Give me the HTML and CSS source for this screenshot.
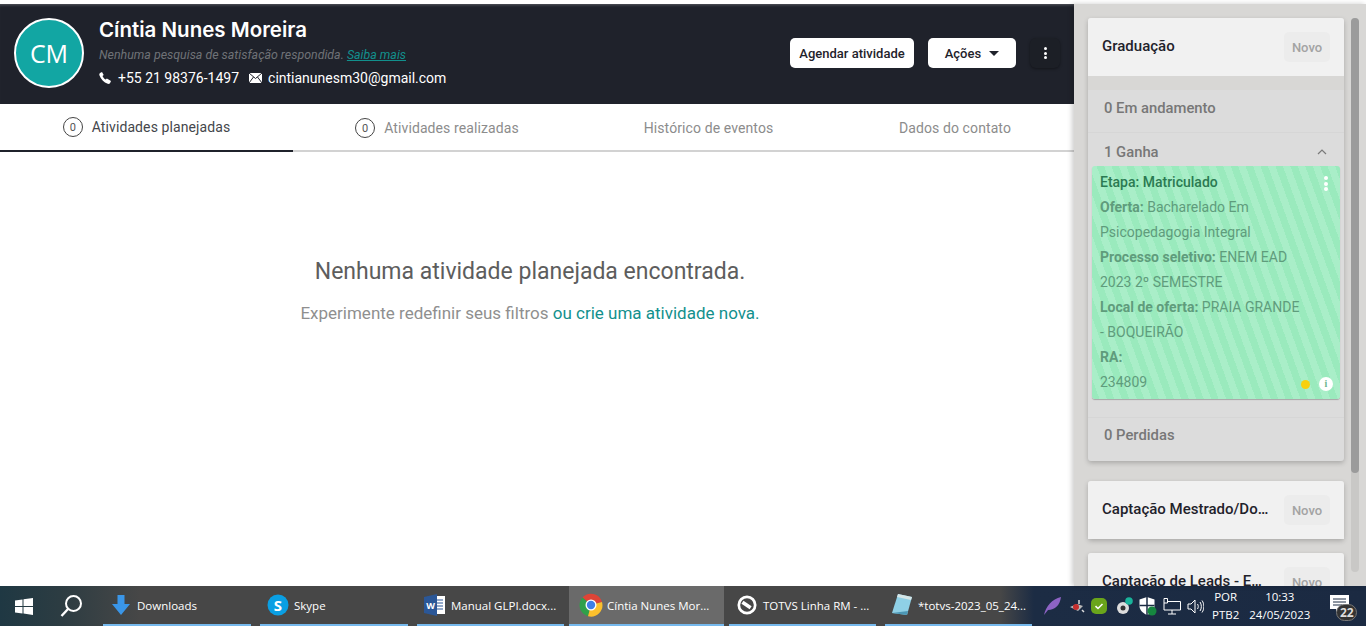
FILE: index.html
```html
<!DOCTYPE html>
<html lang="pt-BR">
<head>
  <meta charset="UTF-8">
  <title>Cíntia Nunes Moreira</title>
  <link rel="stylesheet" href="styles.css">
</head>
<body>
  <div class="top-strip"></div>
  <div class="app">
    <main class="main">
      <header class="contact-header">
        <div class="avatar">CM</div>
        <div class="contact-info">
          <h1>Cíntia Nunes Moreira</h1>
          <p class="survey">Nenhuma pesquisa de satisfação respondida. <a href="#">Saiba mais</a></p>
          <div class="contact-line">
            <svg class="ico-phone" width="12" height="12" viewBox="0 0 12 12"><path d="M1 .9 3 0l1.700 3-1.200 1.100c.6 1.600 1.700 2.800 3.200 3.500L7.900 6.500 12 9l-1 2.200c-.6.700-1.500.9-2.300.6C4.900 10.400 1.800 7.200.4 3.200.1 2.300.4 1.400 1 .9z" fill="#fff"/></svg>
            <span class="phone">+55 21 98376-1497</span>
            <svg class="ico-mail" width="13" height="10" viewBox="0 0 13 10"><rect width="13" height="10" fill="#fff"/><path d="M0 0l6.500 5.500L13 0M0 10l4.500-6M13 10L8.500 4" fill="none" stroke="#1f222b" stroke-width="1"/></svg>
            <span>cintianunesm30@gmail.com</span>
          </div>
        </div>
        <div class="header-actions">
          <button class="btn-white btn-schedule">Agendar atividade</button>
          <button class="btn-white btn-actions">Ações <span class="caret"></span></button>
          <button class="btn-more"><i></i><i></i><i></i></button>
        </div>
      </header>

      <nav class="tabs">
        <div class="tab active"><span class="count">0</span>Atividades planejadas</div>
        <div class="tab"><span class="count">0</span>Atividades realizadas</div>
        <div class="tab">Histórico de eventos</div>
        <div class="tab">Dados do contato</div>
      </nav>

      <section class="empty">
        <h2>Nenhuma atividade planejada encontrada.</h2>
        <p>Experimente redefinir seus filtros <a href="#">ou crie uma atividade nova.</a></p>
      </section>
    </main>

    <aside class="side">
      <div class="funnel">
        <div class="funnel-head">
          <span class="funnel-title">Graduação</span>
          <span class="btn-new">Novo</span>
        </div>
        <div class="funnel-body">
          <div class="status-row">0 Em andamento</div>
          <div class="status-row status-open">
            <span>1 Ganha</span>
            <svg width="10" height="6" viewBox="0 0 10 6"><path d="M1 5l4-4 4 4" fill="none" stroke="#7a7a7a" stroke-width="1.200"/></svg>
          </div>
          <div class="deal">
            <div class="deal-more"><i></i><i></i><i></i></div>
            <p class="deal-stage">Etapa: Matriculado</p>
            <p><b>Oferta:</b> Bacharelado Em Psicopedagogia Integral</p>
            <p><b>Processo seletivo:</b> ENEM EAD 2023 2º SEMESTRE</p>
            <p><b>Local de oferta:</b> PRAIA GRANDE - BOQUEIRÃO</p>
            <p><b>RA:</b></p>
            <p>234809</p>
            <div class="deal-icons">
              <span class="dot"></span>
              <span class="info">i</span>
            </div>
          </div>
          <div class="status-row status-lost">0 Perdidas</div>
        </div>
      </div>

      <div class="funnel funnel-closed">
        <div class="funnel-head">
          <span class="funnel-title">Captação Mestrado/Doutorado</span>
          <span class="btn-new">Novo</span>
        </div>
      </div>

      <div class="funnel funnel-closed funnel-last">
        <div class="funnel-head">
          <span class="funnel-title">Captação de Leads - Especialização</span>
          <span class="btn-new">Novo</span>
        </div>
      </div>
      <div class="scrollbar"><div class="scroll-thumb"></div></div>
    </aside>
  </div>

  <footer class="taskbar">
    <div class="start">
      <svg width="18" height="17" viewBox="0 0 18 17"><path d="M0 2.500 7.500 1.400v6.500H0zM8.500 1.300 18 0v7.900H8.500zM0 8.900h7.500v6.600L0 14.500zM8.500 8.900H18V17l-9.500-1.400z" fill="#fff"/></svg>
    </div>
    <div class="search">
      <svg width="24" height="24" viewBox="0 0 24 24"><circle cx="13.500" cy="9.500" r="7.500" fill="none" stroke="#fff" stroke-width="2"/><path d="M8 15l-6.500 7" stroke="#fff" stroke-width="2.400" fill="none"/></svg>
    </div>
    <div class="tasks">
      <div class="task t-downloads">
        <svg width="18" height="20" viewBox="0 0 18 20"><path d="M5.500 0h7v9H18l-9 11L0 9h5.500z" fill="#3a96e8"/></svg>
        <span>Downloads</span>
      </div>
      <div class="task t-skype">
        <svg width="22" height="22" viewBox="0 0 22 22"><circle cx="11" cy="11" r="10.500" fill="#0a9fe3"/><text x="11" y="16.500" text-anchor="middle" class="skype-s">S</text></svg>
        <span>Skype</span>
      </div>
      <div class="task t-word">
        <svg width="22" height="22" viewBox="0 0 22 22"><rect x="9" y="2" width="12" height="18" fill="#fff"/><path d="M12 6h7M12 9h7M12 12h7M12 15h7" stroke="#2b5797" stroke-width="1.200"/><path d="M0 3l13-3v22L0 19z" fill="#2b5797"/><text x="6.500" y="14.500" text-anchor="middle" class="word-w">W</text></svg>
        <span>Manual GLPI.docx...</span>
      </div>
      <div class="task t-chrome">
        <svg width="24" height="24" viewBox="0 0 24 24"><path d="M12 12 3.400 4.500A11.500 11.500 0 0 1 23 9z" fill="#de4437"/><path d="M12 12 3.400 4.500A11.500 11.500 0 0 0 9 23.200z" fill="#2fa04a"/><path d="M12 12 23 9A11.500 11.500 0 0 1 9 23.200z" fill="#fbc02d"/><circle cx="12" cy="12" r="5.500" fill="#fff"/><circle cx="12" cy="12" r="4.200" fill="#3f7fe6"/></svg>
        <span>Cíntia Nunes Mor...</span>
      </div>
      <div class="task t-totvs">
        <svg width="20" height="20" viewBox="0 0 22 22"><circle cx="11" cy="11" r="9" fill="none" stroke="#fff" stroke-width="3"/><path d="M6 8l9 6" stroke="#fff" stroke-width="4"/></svg>
        <span>TOTVS Linha RM - ...</span>
      </div>
      <div class="task t-notes">
        <svg width="22" height="24" viewBox="0 0 22 24"><path d="M7 1l14 3-5 18L1 20z" fill="#8fd0e6"/><path d="M7 1l14 3-1 3L6 4z" fill="#d5e6e8"/><path d="M1 20l15 2 1-4z" fill="#4c97b5"/></svg>
        <span>*totvs-2023_05_24...</span>
      </div>
    </div>
    <div class="tray">
      <svg class="tray-ico ico-feather" width="20" height="20" viewBox="0 0 20 20"><path d="M2 19C4 10 10 3 19 1c-1 8-6 13-13 13z" fill="#8d63c4"/></svg>
      <svg class="tray-ico ico-bird" width="18" height="16" viewBox="0 0 18 16"><path d="M2 9l7-3 6 2-5 5z" fill="#b9b9b9"/><circle cx="8" cy="9" r="3" fill="#c62f2f"/><path d="M11 2v4M14 12l2 2" stroke="#ddd" stroke-width="1.500"/></svg>
      <svg class="tray-ico ico-check" width="16" height="16" viewBox="0 0 16 16"><rect width="16" height="16" rx="5" fill="#6aa51b"/><path d="M4.500 8.200l2.500 2.300 4.500-4.500" fill="none" stroke="#fff" stroke-width="1.600"/></svg>
      <svg class="tray-ico ico-sync" width="18" height="18" viewBox="0 0 18 18"><circle cx="7" cy="11" r="6" fill="#ddd"/><circle cx="7" cy="11" r="2.500" fill="#333"/><circle cx="13" cy="4" r="3.800" fill="#19b39a"/></svg>
      <svg class="tray-ico" width="18" height="19" viewBox="0 0 18 19"><path d="M8 0l7.500 2.500V9c0 4-3 7-7.500 9C3.500 16 .5 13 .5 9V2.500z" fill="#fff"/><path d="M8 0v18M.5 8.500h15" stroke="#1c2c44" stroke-width="1.500"/><circle cx="13" cy="14" r="4.500" fill="#16873f"/></svg>
      <svg class="tray-ico" width="18" height="17" viewBox="0 0 18 17"><path d="M4.500 3.500H17.500V12H1V.5H4.500V5H1M9 12v4M5 16h8" fill="none" stroke="#fff" stroke-width="1"/></svg>
      <svg class="tray-ico" width="17" height="15" viewBox="0 0 17 15"><path d="M1 5h3l4-4v13l-4-4H1zM10.500 5c1 1.500 1 3.500 0 5M13 3c1.800 2.500 1.800 6.500 0 9M15 1.500c2.500 3.500 2.500 8.500 0 12" fill="none" stroke="#fff" stroke-width="1"/></svg>
      <div class="lang"><span>POR</span><span>PTB2</span></div>
      <div class="clock"><span>10:33</span><span>24/05/2023</span></div>
      <div class="notify">
        <svg width="19" height="17" viewBox="0 0 19 17"><path d="M0 0h19v14H9l-3 3v-3H0z" fill="#fff"/><path d="M3 4h13M3 7h13M3 10h9" stroke="#1c2c44" stroke-width="1"/></svg>
        <span class="notify-count">22</span>
      </div>
    </div>
  </footer>
</body>
</html>
```

FILE: styles.css
```css
* {
  box-sizing: border-box;
}

html, body {
  margin: 0;
  height: 626px;
  overflow: hidden;
}

body {
  display: flex;
  flex-direction: column;
  font-family: Roboto, "Liberation Sans", sans-serif;
  background: #fff;
  color: #1f222b;
}

.top-strip {
  height: 4px;
  background: #fff;
  flex: none;
}

.app {
  height: 582px;
  display: flex;
  flex: none;
}

/* main column */
.main {
  width: 1074px;
  flex: none;
  background: #fff;
}

.contact-header {
  height: 100px;
  background: #1f222b;
  box-shadow: inset 0 3px 3px -2px rgba(255, 255, 255, 0.25);
  display: flex;
  align-items: flex-start;
  padding: 14px 14px 0 14px;
  color: #fff;
}

.avatar {
  width: 70px;
  height: 70px;
  border-radius: 50%;
  border: 2px solid #fff;
  background: #12a6a3;
  display: flex;
  align-items: center;
  justify-content: center;
  font-family: "Open Sans", sans-serif;
  font-size: 25px;
  flex: none;
}

.contact-info {
  margin-left: 15px;
}

.contact-info h1 {
  font-family: Inter, sans-serif;
  font-weight: 600;
  font-size: 20.500px;
  line-height: 24px;
  margin: 0;
}

.survey {
  margin: 6px 0 0;
  font-size: 12.400px;
  line-height: 14px;
  font-style: italic;
  color: #6f7277;
}

.survey a {
  color: #12908d;
}

.contact-line {
  display: flex;
  align-items: center;
  margin-top: 7px;
  font-size: 14px;
  line-height: 18px;
}

.ico-phone {
  margin-right: 7px;
}

.phone {
  margin-right: 10px;
}

.ico-mail {
  margin-right: 6px;
}

.header-actions {
  margin-left: auto;
  display: flex;
  align-items: center;
  padding-top: 20px;
}

.btn-white {
  height: 30px;
  background: #fff;
  color: #1f222b;
  border: none;
  border-radius: 5px;
  font-family: Roboto, sans-serif;
  font-size: 13px;
  font-weight: 500;
  padding: 0;
}

.btn-schedule {
  width: 124px;
}

.btn-actions {
  width: 88px;
  margin-left: 14px;
}

.caret {
  display: inline-block;
  width: 0;
  height: 0;
  margin-left: 5px;
  vertical-align: 2px;
  border-left: 5px solid transparent;
  border-right: 5px solid transparent;
  border-top: 5px solid #1f222b;
}

.btn-more {
  width: 30px;
  height: 30px;
  margin-left: 14px;
  background: #1c1f26;
  border: none;
  border-radius: 6px;
  display: flex;
  flex-direction: column;
  align-items: center;
  justify-content: center;
  gap: 1.500px;
  padding: 0;
  box-shadow: 0 1px 3px rgba(0, 0, 0, 0.4);
}

.btn-more i {
  width: 3px;
  height: 3px;
  border-radius: 50%;
  background: #fff;
}

/* tabs */
.tabs {
  height: 48px;
  display: grid;
  grid-template-columns: 293px 288px 255px 1fr;
  border-bottom: 2px solid #d2d2d2;
}

.tab {
  display: flex;
  align-items: center;
  justify-content: center;
  height: 48px;
  font-size: 14px;
  letter-spacing: 0.1px;
  color: #8c8c8c;
}

.tab.active {
  color: #44464b;
  border-bottom: 2px solid #1f222b;
}

.count {
  width: 20px;
  height: 20px;
  border: 1px solid #444;
  border-radius: 50%;
  display: flex;
  align-items: center;
  justify-content: center;
  font-size: 11px;
  color: #555;
  margin-right: 9px;
  letter-spacing: 0;
}

/* empty state */
.empty {
  text-align: center;
  padding: 106px 14px 0 0;
}

.empty h2 {
  margin: 0;
  font-weight: 400;
  font-size: 23px;
  line-height: 28px;
  color: #5d5d5d;
}

.empty p {
  margin: 17px 0 0;
  font-size: 17px;
  line-height: 20px;
  color: #8f8f8f;
}

.empty a {
  color: #12908d;
  text-decoration: none;
}

/* funnels on the right */
.side {
  position: relative;
  flex: 1;
  background: #d8d7d5;
  box-shadow: -2px 0 5px rgba(0, 0, 0, 0.2);
  padding: 14px 22px 0 14px;
  overflow: hidden;
}

.funnel {
  width: 256px;
  border-radius: 3px;
  box-shadow: 0 2px 5px rgba(0, 0, 0, 0.22);
  background: #dcdcdc;
}

.funnel-closed {
  margin-top: 20px;
}

.funnel-last {
  margin-top: 14px;
}

.funnel-head {
  height: 58px;
  background: #f1f1f1;
  display: flex;
  align-items: center;
  justify-content: space-between;
  padding: 0 14px;
  border-radius: 3px 3px 0 0;
}

.funnel-title {
  font-size: 15px;
  font-weight: 500;
  color: #1f222b;
  white-space: nowrap;
  overflow: hidden;
  text-overflow: ellipsis;
  max-width: 167px;
  margin-top: -2px;
}

.btn-new {
  width: 46px;
  height: 30px;
  flex: none;
  border-radius: 5px;
  background: #ececec;
  color: #a3a3a3;
  font-size: 13px;
  font-weight: 500;
  display: flex;
  align-items: center;
  justify-content: center;
}

.funnel-body {
  border-top: 14px solid #d8d7d5;
}

.status-row {
  height: 43px;
  padding: 0 16px 6px;
  display: flex;
  align-items: center;
  justify-content: space-between;
  font-size: 14.800px;
  font-weight: 500;
  color: #777;
  border-bottom: 1px solid #d6d6d6;
}

.status-open {
  height: 33px;
  padding-top: 5px;
  padding-bottom: 0;
  border-bottom: none;
}

.status-open svg {
  margin-right: 1px;
}

.status-lost {
  height: 44px;
  margin-top: 18px;
  padding-bottom: 10px;
  border-top: 1px solid #d6d6d6;
  border-bottom: none;
}

.deal {
  position: relative;
  width: 248px;
  height: 233px;
  margin: 0 4px;
  padding: 4px 8px;
  border-radius: 3px;
  box-shadow: 0 1px 1px rgba(0, 0, 0, 0.25);
  background: repeating-linear-gradient(70deg, #9aeabd 0, #9aeabd 7px, #a9eec8 7px, #a9eec8 14px);
  font-size: 14px;
  color: #5f9c7c;
}

.deal p {
  margin: 0;
  line-height: 25px;
  width: 204px;
}

.deal b {
  font-weight: 700;
}

.deal .deal-stage {
  font-weight: 500;
  color: #2b7a52;
}

.deal-more {
  position: absolute;
  top: 10px;
  right: 12px;
  display: flex;
  flex-direction: column;
  gap: 1.500px;
}

.deal-more i {
  width: 4px;
  height: 4px;
  border-radius: 50%;
  background: #fff;
}

.deal-icons {
  position: absolute;
  right: 7px;
  bottom: 8px;
  display: flex;
  align-items: center;
  gap: 9px;
}

.dot {
  width: 9px;
  height: 9px;
  border-radius: 50%;
  background: #f7d00f;
}

.info {
  width: 14px;
  height: 14px;
  border-radius: 50%;
  background: #fff;
  color: #6bb58e;
  font-family: "Liberation Serif", serif;
  font-weight: 700;
  font-size: 10px;
  line-height: 14px;
  text-align: center;
}

.scrollbar {
  position: absolute;
  top: 14px;
  right: 7px;
  bottom: 14px;
  width: 8px;
  border-radius: 4px;
  background: #c9c8c6;
}

.scroll-thumb {
  height: 455px;
  border-radius: 4px;
  background: #9b9b9b;
}

/* windows taskbar */
.taskbar {
  height: 40px;
  flex: none;
  display: flex;
  align-items: stretch;
  color: #fff;
  font-family: "Open Sans", sans-serif;
  font-size: 11.500px;
  background: linear-gradient(90deg, #1f3843 0, #2c3c42 60px, #474747 140px, #474747 1000px, #1c2c44 1034px, #1b2a42 100%);
}

.start {
  width: 48px;
  display: flex;
  align-items: center;
  justify-content: center;
}

.search {
  width: 48px;
  display: flex;
  align-items: center;
  justify-content: center;
}

.tasks {
  margin-left: 7px;
  display: flex;
  flex: none;
}

.task {
  width: 147px;
  flex: none;
  display: flex;
  align-items: center;
  border-bottom: 2px solid #76b9ed;
  white-space: nowrap;
  overflow: hidden;
}

.t-downloads {
  width: 148px;
  padding-left: 9px;
  gap: 7px;
}

.t-skype {
  width: 148px;
  margin-left: 9px;
  padding-left: 7px;
  gap: 5px;
}

.t-word {
  margin-left: 9px;
  padding-left: 7px;
  gap: 5px;
}

.t-chrome {
  width: 155px;
  margin-left: 5px;
  padding-left: 10px;
  gap: 4px;
  background: #6a6a6a;
}

.t-totvs {
  margin-left: 5px;
  padding-left: 8px;
  gap: 6px;
}

.t-notes {
  margin-left: 9px;
  padding-left: 6px;
  gap: 5px;
}

.skype-s {
  fill: #fff;
  font-family: "Open Sans", sans-serif;
  font-weight: 700;
  font-size: 15px;
}

.word-w {
  fill: #fff;
  font-family: "Open Sans", sans-serif;
  font-weight: 700;
  font-size: 9px;
}

.tray {
  flex: 1;
  display: flex;
  align-items: center;
  padding-left: 10px;
}

.tray-ico {
  margin-right: 6px;
  flex: none;
}

.ico-bird {
  margin-right: 5px;
}

.ico-check {
  margin-right: 9px;
}

.ico-sync {
  margin-right: 5px;
}

.lang, .clock {
  display: flex;
  flex-direction: column;
  align-items: center;
  line-height: 18px;
  font-size: 11.500px;
}

.lang {
  margin-left: 2px;
}

.clock {
  margin-left: 10px;
}

.notify {
  position: relative;
  margin-left: 20px;
  width: 28px;
  height: 30px;
  padding-top: 4px;
}

.notify-count {
  position: absolute;
  left: 6px;
  bottom: 0;
  width: 21px;
  height: 17px;
  border-radius: 9px;
  border: 1px solid #777;
  background: #333;
  color: #ddd;
  font-size: 12px;
  font-weight: 700;
  line-height: 15px;
  text-align: center;
}
```
